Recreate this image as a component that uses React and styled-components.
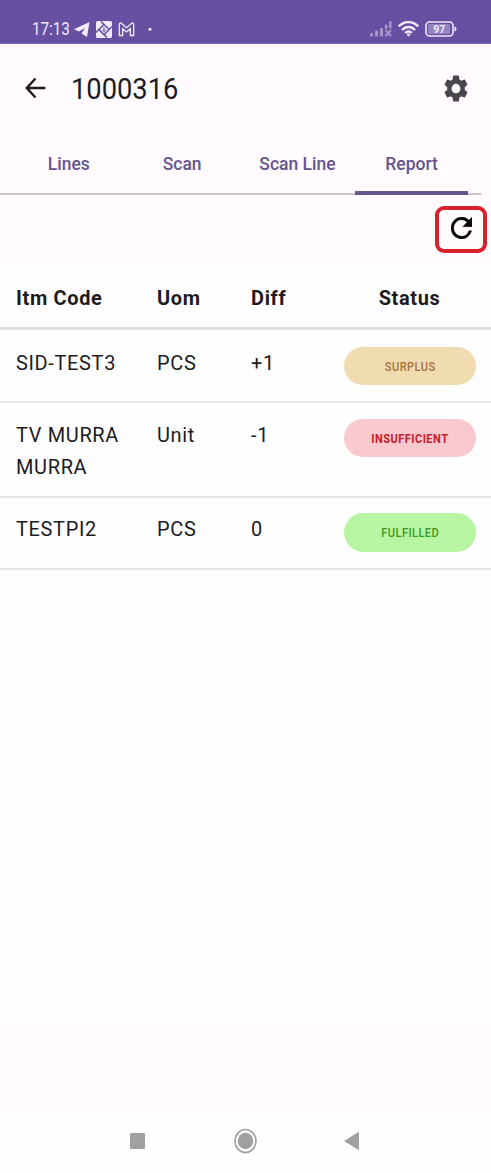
import React from "react";
import styled, { createGlobalStyle } from "styled-components";

const GlobalStyle = createGlobalStyle`
  *, *::before, *::after { box-sizing: border-box; }
  body { margin: 0; background: #fefefe; font-family: Roboto, "Liberation Sans", sans-serif; color: #1d1b1f; }
`;

const Screen = styled.div`
  width: 491px;
  height: 1173px;
  display: flex;
  flex-direction: column;
  overflow: hidden;
`;

const Label = styled.span`
  display: inline-block;
  white-space: pre;
  transform: scaleX(${(p) => p.$sx ?? 0.95});
  transform-origin: ${(p) => p.$origin ?? "left"} center;
`;

const Icon = styled.svg`
  display: block;
  flex: none;
  width: ${(p) => p.$w}px;
  height: ${(p) => p.$h}px;
`;

const StatusBar = styled.header`
  height: 44px;
  flex: none;
  display: flex;
  align-items: center;
  justify-content: space-between;
  padding: 15px 34px 0 32px;
  background: #6750a2;
  border-bottom: 1px solid #7b68ad;
  color: #f0eaf9;
`;

const StatusGroup = styled.div`
  display: flex;
  align-items: center;
  gap: ${(p) => p.$gap}px;
`;

const Clock = styled.time`
  width: 36px;
  font-size: 17.5px;
  line-height: 20px;
`;

const AppBar = styled.div`
  height: 88px;
  flex: none;
  display: flex;
  align-items: center;
  padding: 0 23px 0 25px;
  background: #fffbff;
`;

const Title = styled.h1`
  flex: 1;
  margin: 2px 0 0 25px;
  font-size: 30px;
  line-height: 36px;
  font-weight: 400;
`;

const Tabs = styled.nav`
  height: 63px;
  flex: none;
  display: flex;
  padding-left: 12px;
  background:
    linear-gradient(#cac5cb, #cac5cb) 0 61px / 481px 2px no-repeat,
    #fffbff;
`;

const Tab = styled.a`
  width: ${(p) => p.$width}px;
  display: flex;
  justify-content: center;
  padding-top: 20px;
  font-size: 19px;
  line-height: 24px;
  font-weight: 500;
  color: #65558f;
  border-bottom: 4px solid ${(p) => (p.$active ? "#65558f" : "transparent")};
`;

const Toolbar = styled.div`
  height: 69px;
  flex: none;
  display: flex;
  justify-content: flex-end;
  align-items: flex-start;
  padding: 11px 4px 0 0;
  background: #fffbff;
`;

const RefreshButton = styled.button`
  width: 52px;
  height: 47px;
  padding: 0 0 4px 0;
  display: flex;
  align-items: center;
  justify-content: center;
  background: none;
  border: 4px solid #d8212b;
  border-radius: 9px;
`;

const Table = styled.main`
  flex: 1;
  background: #fefefe;
`;

const Row = styled.div`
  display: grid;
  grid-template-columns: 141px 94px 93.5px 132px;
  align-items: start;
  height: ${(p) => p.$height}px;
  padding: ${(p) => p.$top}px 0 0 15.5px;
  border-bottom: ${(p) => (p.$head ? 3 : 2)}px solid ${(p) => (p.$head ? "#e1e1e1" : "#e4e4e4")};
  font-size: 21px;
  line-height: 32px;
  font-weight: ${(p) => (p.$head ? 700 : 400)};
  letter-spacing: 0.7px;
`;

const Cell = styled.div`
  text-align: ${(p) => (p.$center ? "center" : "left")};
`;

const Pill = styled.div`
  height: 38.5px;
  display: flex;
  align-items: center;
  justify-content: center;
  padding-top: 2px;
  border-radius: 20px;
  background: ${(p) => p.$bg};
  color: ${(p) => p.$fg};
  font-size: 12.3px;
  line-height: 16px;
  font-weight: ${(p) => p.$weight};
  letter-spacing: 0.5px;
`;

const Footer = styled.div`
  height: 85px;
  flex: none;
  background: #fffbff;
`;

const NavBar = styled.nav`
  height: 63px;
  flex: none;
  display: flex;
  align-items: center;
  justify-content: space-between;
  padding: 0 132px 1px 130px;
  background: #fefefe;
  color: #a0a0a0;
`;

const tabs = [
  { label: "Lines", width: 114 },
  { label: "Scan", width: 113 },
  { label: "Scan Line", width: 116 },
  { label: "Report", width: 113, active: true },
];

const rows = [
  { lines: ["SID-TEST3"], uom: "PCS", diff: "+1", status: "SURPLUS", bg: "#f0dcb0", fg: "#a8703c", weight: 500, height: 72.5, top: 16.5 },
  { lines: ["TV MURRA", "MURRA"], uom: "Unit", diff: "-1", status: "INSUFFICIENT", bg: "#f8c9cf", fg: "#c4202c", weight: 700, height: 95, top: 16 },
  { lines: ["TESTPI2"], uom: "PCS", diff: "0", status: "FULFILLED", bg: "#b7f5a2", fg: "#37991f", weight: 500, height: 72, top: 15.5 },
];

function PhoneStatus() {
  return (
    <StatusBar>
      <StatusGroup $gap={6}>
        <Clock><Label $sx={0.87}>17:13</Label></Clock>
        <Icon $w={16} $h={15} viewBox="0 0 16 15" fill="currentColor">
          <path d="M0 7.2 15.5 0 13 15 7.6 11.6 11 6 4.9 9.5z" />
        </Icon>
        <Icon $w={16} $h={17} viewBox="0 0 16 17">
          <rect width="16" height="17" rx="1.5" fill="currentColor" />
          <path d="M5 .5 8 3.500 13.200 8.500 8 13.600 2.800 8.500 8 3.500M16 5.500l-2.800 3M11 16.500l-3-2.900M0 11.500l2.800-3" fill="none" stroke="#6750a2" strokeWidth="1.5" />
          <path d="M8 6v4.500M6.200 8.500 8 10.500l1.800-2" fill="none" stroke="#6750a2" strokeWidth="1" />
        </Icon>
        <Icon $w={17} $h={15} viewBox="0 0 17 15" fill="none" stroke="currentColor" strokeWidth="1.3">
          <path d="M1.300 13.500V2.400c0-1.300 1.400-1.800 2.300-.9l4.900 4.200 4.900-4.200c.9-.9 2.300-.4 2.300.9v11.100h-3.300V6.700L8.500 10 4.600 6.700v6.800z" />
        </Icon>
        <Icon $w={18} $h={15} viewBox="0 0 18 15" fill="currentColor">
          <circle cx="9" cy="7.2" r="1.5" />
        </Icon>
      </StatusGroup>
      <StatusGroup $gap={6}>
        <Icon $w={22} $h={16} viewBox="0 0 22 16" fill="#a497ca">
          <rect x="0" y="12" width="3" height="3.500" rx="1" />
          <rect x="5" y="9.500" width="3" height="6" rx="1" />
          <rect x="10" y="7" width="3" height="8.500" rx="1" />
          <rect x="14.800" y="3.500" width="2.600" height="4.500" rx="1" />
          <rect x="19" y="0" width="2.600" height="7.500" rx="1" />
          <path d="m15.500 9 5.500 6M21 9l-5.500 6" stroke="#a497ca" strokeWidth="2" />
        </Icon>
        <Icon $w={21} $h={16} viewBox="0 0 21 16" fill="none" stroke="currentColor" strokeWidth="2.4">
          <path d="M.8 5.500C6.300-.4 14.700-.4 20.200 5.500M4 9c3.800-4 9.200-4 13 0M7.200 12c2-2.100 4.600-2.100 6.600 0" />
          <path d="m8.500 13.300 2 2.500 2-2.500q-2-1.500-4 0z" fill="currentColor" stroke="none" />
        </Icon>
        <Icon $w={32} $h={16} viewBox="0 0 32 16">
          <rect x="1" y="1" width="27" height="14" rx="3.500" fill="none" stroke="currentColor" strokeWidth="1.600" />
          <rect x="3" y="3" width="22" height="10" rx="1.500" fill="#9384c1" />
          <path d="M29.500 5.500q2 .3 2 2.500t-2 2.500z" fill="currentColor" />
          <text x="14.300" y="11.800" textAnchor="middle" fontSize="10.500" fontWeight="700" fill="currentColor">97</text>
        </Icon>
      </StatusGroup>
    </StatusBar>
  );
}

export default function App() {
  return (
    <Screen>
      <GlobalStyle />
      <PhoneStatus />
      <AppBar>
        <Icon $w={21} $h={22} viewBox="0 0 21 22" fill="none" stroke="#1d1b1f" strokeWidth="2.400">
          <path d="M20.300 11H2M10.500 1.500 1.800 11l8.700 9.500" />
        </Icon>
        <Title><Label $sx={0.91}>1000316</Label></Title>
        <Icon $w={24} $h={27} viewBox="2.200 2 19.600 20" preserveAspectRatio="none" fill="#48454e">
          <path d="M19.140 12.940c.04-.3.060-.610.060-.940 0-.320-.020-.640-.070-.940l2.030-1.580c.180-.140.230-.410.120-.610l-1.920-3.320c-.120-.220-.370-.290-.590-.220l-2.390.960c-.5-.380-1.030-.7-1.620-.940l-.360-2.540c-.040-.240-.240-.410-.480-.410h-3.840c-.240 0-.430.170-.470.410l-.360 2.540c-.590.240-1.130.570-1.620.940l-2.390-.960c-.220-.080-.470 0-.590.220L2.740 8.870c-.120.210-.080.470.120.610l2.030 1.580c-.050.3-.090.630-.090.940s.020.640.070.940l-2.030 1.580c-.180.140-.230.410-.120.610l1.920 3.320c.120.220.370.290.590.220l2.390-.960c.5.380 1.030.7 1.620.940l.360 2.540c.050.240.240.410.480.410h3.840c.240 0 .440-.170.470-.410l.360-2.540c.590-.240 1.130-.560 1.620-.940l2.390.960c.220.080.470 0 .590-.220l1.920-3.320c.120-.220.070-.470-.120-.610zM12 15.600c-1.980 0-3.600-1.620-3.600-3.600s1.620-3.600 3.600-3.600 3.600 1.620 3.600 3.600-1.620 3.600-3.600 3.600z" />
        </Icon>
      </AppBar>
      <Tabs>
        {tabs.map((t) => (
          <Tab key={t.label} $active={t.active} $width={t.width}>
            <Label $origin="center" $sx={0.92}>{t.label}</Label>
          </Tab>
        ))}
      </Tabs>
      <Toolbar>
        <RefreshButton aria-label="Refresh">
          <Icon $w={21} $h={22} viewBox="4 4 16 16" preserveAspectRatio="none" fill="#050505">
            <path d="M17.650 6.350A7.958 7.958 0 0 0 12 4a8 8 0 1 0 7.730 10h-2.080A5.990 5.990 0 0 1 12 18a6 6 0 1 1 0-12c1.660 0 3.140.690 4.220 1.780L13 11h7V4z" stroke="#050505" strokeWidth=".3" />
          </Icon>
        </RefreshButton>
      </Toolbar>
      <Table>
        <Row $head $height={66} $top={18}>
          <Cell><Label>Itm Code</Label></Cell>
          <Cell><Label>Uom</Label></Cell>
          <Cell><Label>Diff</Label></Cell>
          <Cell $center><Label $origin="center">Status</Label></Cell>
        </Row>
        {rows.map((r) => (
          <Row key={r.status} $height={r.height} $top={r.top}>
            <Cell>{r.lines.map((l) => <div key={l}><Label>{l}</Label></div>)}</Cell>
            <Cell><Label>{r.uom}</Label></Cell>
            <Cell><Label>{r.diff}</Label></Cell>
            <Pill $bg={r.bg} $fg={r.fg} $weight={r.weight}>
              <Label $origin="center" $sx={0.9}>{r.status}</Label>
            </Pill>
          </Row>
        ))}
      </Table>
      <Footer />
      <NavBar>
        <Icon $w={15} $h={16} viewBox="0 0 15 16"><rect width="15" height="16" rx="1" fill="currentColor" /></Icon>
        <Icon $w={24} $h={26} viewBox="0 0 24 26">
          <ellipse cx="12.500" cy="13" rx="10.500" ry="11.500" fill="none" stroke="currentColor" strokeWidth="1.600" />
          <ellipse cx="12.500" cy="13" rx="7.800" ry="8.300" fill="currentColor" />
        </Icon>
        <Icon $w={15} $h={18} viewBox="0 0 15 18"><path d="M0 9 14 .3q1-.4 1 .6v16.200q0 1-1 .6z" fill="currentColor" /></Icon>
      </NavBar>
    </Screen>
  );
}
